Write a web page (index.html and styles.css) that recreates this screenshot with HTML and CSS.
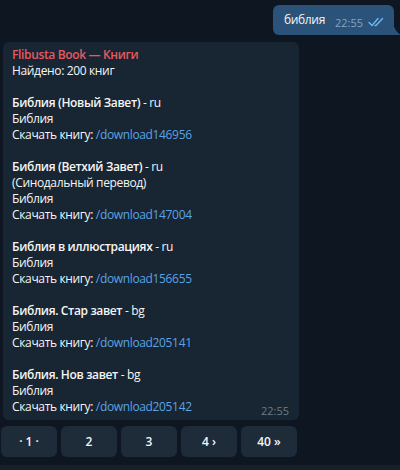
FILE: index.html
```html
<!DOCTYPE html>
<html lang="ru">
<head>
<meta charset="utf-8">
<title>Flibusta Book</title>
<link rel="stylesheet" href="styles.css">
</head>
<body>
<div class="chat">
  <div class="row row-out">
    <div class="bubble bubble-out">
      <span class="text">библия</span>
      <span class="meta meta-out">22:55
        <svg class="checks" width="17" height="10" viewBox="0 0 17 10" fill="none" stroke="#6fb7f5" stroke-width="1.4" stroke-linecap="round" stroke-linejoin="round">
          <path d="M1 5.5 L4 8.5 L10 1.5"/>
          <path d="M7 8.5 L8 8.5 L14.5 1.5"/>
        </svg>
      </span>
      <svg class="tail-out" width="9" height="12" viewBox="0 0 9 12"><path d="M0 0 L0 12 L8 12 C6 11 2 8 0 0 Z" fill="#2b5278"/></svg>
    </div>
  </div>

  <div class="bubble bubble-in">
    <div class="line sender">Flibusta Book — Книги</div>
    <div class="line">Найдено: 200 книг</div>
    <div class="line blank"></div>

    <div class="line"><b>Библия (Новый Завет)</b> - ru</div>
    <div class="line">Библия</div>
    <div class="line">Скачать книгу: <a class="cmd">/download146956</a></div>
    <div class="line blank"></div>

    <div class="line"><b>Библия (Ветхий Завет)</b> - ru</div>
    <div class="line">(Синодальный перевод)</div>
    <div class="line">Библия</div>
    <div class="line">Скачать книгу: <a class="cmd">/download147004</a></div>
    <div class="line blank"></div>

    <div class="line"><b>Библия в иллюстрациях</b> - ru</div>
    <div class="line">Библия</div>
    <div class="line">Скачать книгу: <a class="cmd">/download156655</a></div>
    <div class="line blank"></div>

    <div class="line"><b>Библия. Стар завет</b> - bg</div>
    <div class="line">Библия</div>
    <div class="line">Скачать книгу: <a class="cmd">/download205141</a></div>
    <div class="line blank"></div>

    <div class="line"><b>Библия. Нов завет</b> - bg</div>
    <div class="line">Библия</div>
    <div class="line">Скачать книгу: <a class="cmd">/download205142</a></div>
    <span class="meta meta-in">22:55</span>
  </div>

  <div class="keyboard">
    <button class="key">· 1 ·</button>
    <button class="key">2</button>
    <button class="key">3</button>
    <button class="key">4 ›</button>
    <button class="key">40 »</button>
  </div>
  <div class="composer"></div>
</div>
</body>
</html>
```

FILE: styles.css
```css
html, body {
  margin: 0;
  padding: 0;
  background: #0e1621;
}

.chat {
  width: 400px;
  height: 470px;
  overflow: hidden;
  font-family: "Open Sans", "Noto Sans", sans-serif;
  font-size: 12px;
  letter-spacing: -0.35px;
  color: #f5f5f5;
  display: flex;
  flex-direction: column;
}

.row {
  display: flex;
}

.row-out {
  justify-content: flex-end;
  padding: 5px 6px 0 0;
}

.bubble {
  position: relative;
  border-radius: 6px;
}

.bubble-out {
  background: #2b5278;
  border-bottom-right-radius: 0;
  height: 30px;
  padding: 0 9px 0 11px;
  display: flex;
  align-items: center;
  gap: 10px;
  box-sizing: border-box;
}

.bubble-out .text {
  margin-top: -1px;
}

.tail-out {
  position: absolute;
  right: -8px;
  bottom: 0;
}

.meta {
  font-size: 11px;
  letter-spacing: 0;
  display: inline-flex;
  align-items: center;
  gap: 5px;
}

.meta-out {
  color: #7ea6cd;
  margin-top: 5px;
}

.checks {
  margin-top: -2px;
}

.bubble-in {
  margin: 7px 0 0 3px;
  width: 296px;
  box-sizing: border-box;
  background: #182533;
  padding: 5px 10px 5px 9px;
}

.line {
  height: 16px;
  line-height: 16px;
  white-space: nowrap;
}

.line b {
  font-weight: 600;
}

.sender {
  color: #e8595f;
  font-weight: 600;
}

.cmd {
  color: #5aa3e3;
  text-decoration: none;
}

.meta-in {
  position: absolute;
  right: 10px;
  bottom: 2px;
  color: #6b7c8c;
}

.keyboard {
  display: flex;
  gap: 4px;
  margin: 6px 0 0 1px;
}

.key {
  width: 56px;
  height: 31px;
  border: 0;
  border-radius: 6px;
  background: #1e2c3a;
  color: #f2f4f6;
  font-family: "Open Sans", "Noto Sans", sans-serif;
  font-size: 12px;
  font-weight: 600;
  padding: 0;
}

.composer {
  margin-top: auto;
  height: 5px;
  background: #17212b;
}
```
